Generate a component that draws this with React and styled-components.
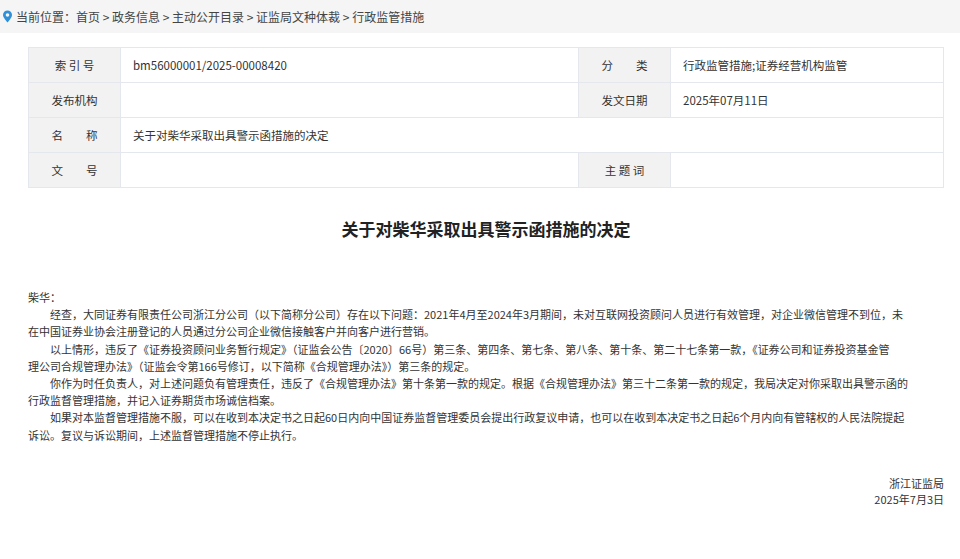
import React from "react";
import styled, { createGlobalStyle } from "styled-components";

const Global = createGlobalStyle`
  body { margin: 0; background: #fff; font-family: "Noto Sans CJK SC", "Noto Sans", sans-serif; color: #333; }
`;
const Crumb = styled.div`
  height: 33px; background: #f5f5f5; display: flex; align-items: center; gap: 3px;
  padding-left: 2px; font-size: 12px; color: #444;
`;
const Page = styled.div` padding: 14px 16px 0 28px; `;
const Table = styled.div`
  display: grid; grid-template-columns: 92px 458px 92px 1fr;
  border: 1px solid #e4e8ee; border-bottom: none; border-right: none;
`;
const Cell = styled.div`
  height: 34px; display: flex; align-items: center;
  border-right: 1px solid #e4e8ee; border-bottom: 1px solid #e4e8ee;
  font-size: 11.5px; color: #333;
  ${p => p.$label ? `background:#f2f2f2; justify-content:center;` : `padding-left: 12px; background:#fff;`}
  ${p => p.$span ? `grid-column: span 3;` : ""}
  white-space: pre;
`;
const Title = styled.h1`
  margin: 28px 0 0; text-align: center; font-size: 17px; font-weight: bold; color: #222;
`;
const Body = styled.div`
  margin-top: 48px; font-size: 11px; line-height: 17.2px; color: #333;
`;
const Line = styled.div` white-space: nowrap; ${p => p.$indent ? "padding-left: 22px;" : ""} `;
const Sign = styled.div` margin-top: 31px; text-align: right; font-size: 11px; line-height: 16px; `;

const rows = [
  ["索 引 号", "bm56000001/2025-00008420", "分　　类", "行政监管措施;证券经营机构监管"],
  ["发布机构", "", "发文日期", "2025年07月11日"],
  ["名　　称", "关于对柴华采取出具警示函措施的决定"],
  ["文　　号", "", "主 题 词", ""],
];

export default function App() {
  return (
    <>
      <Global />
      <Crumb>
        <svg width="11" height="13" viewBox="0 0 11 13"><path d="M5.5 12.5S1 7.8 1 5a4.5 4.5 0 0 1 9 0c0 2.8-4.5 7.5-4.5 7.5z" fill="#2f8fd8"/><circle cx="5.5" cy="5" r="1.8" fill="#f5f5f5"/></svg>
        <span>当前位置：首页 &gt; 政务信息 &gt; 主动公开目录 &gt; 证监局文种体裁 &gt; 行政监管措施</span>
      </Crumb>
      <Page>
        <Table>
          {rows.map((r, i) => r.length === 2 ? (
            <React.Fragment key={i}><Cell $label>{r[0]}</Cell><Cell $span>{r[1]}</Cell></React.Fragment>
          ) : (
            <React.Fragment key={i}><Cell $label>{r[0]}</Cell><Cell>{r[1]}</Cell><Cell $label>{r[2]}</Cell><Cell>{r[3]}</Cell></React.Fragment>
          ))}
        </Table>
        <Title>关于对柴华采取出具警示函措施的决定</Title>
        <Body>
          <Line>柴华：</Line>
          <Line $indent>经查，大同证券有限责任公司浙江分公司（以下简称分公司）存在以下问题：2021年4月至2024年3月期间，未对互联网投资顾问人员进行有效管理，对企业微信管理不到位，未</Line>
          <Line>在中国证券业协会注册登记的人员通过分公司企业微信接触客户并向客户进行营销。</Line>
          <Line $indent>以上情形，违反了《证券投资顾问业务暂行规定》（证监会公告〔2020〕66号）第三条、第四条、第七条、第八条、第十条、第二十七条第一款，《证券公司和证券投资基金管</Line>
          <Line>理公司合规管理办法》（证监会令第166号修订，以下简称《合规管理办法》）第三条的规定。</Line>
          <Line $indent>你作为时任负责人，对上述问题负有管理责任，违反了《合规管理办法》第十条第一款的规定。根据《合规管理办法》第三十二条第一款的规定，我局决定对你采取出具警示函的</Line>
          <Line>行政监督管理措施，并记入证券期货市场诚信档案。</Line>
          <Line $indent>如果对本监督管理措施不服，可以在收到本决定书之日起60日内向中国证券监督管理委员会提出行政复议申请，也可以在收到本决定书之日起6个月内向有管辖权的人民法院提起</Line>
          <Line>诉讼。复议与诉讼期间，上述监督管理措施不停止执行。</Line>
        </Body>
        <Sign>浙江证监局<br />2025年7月3日</Sign>
      </Page>
    </>
  );
}
